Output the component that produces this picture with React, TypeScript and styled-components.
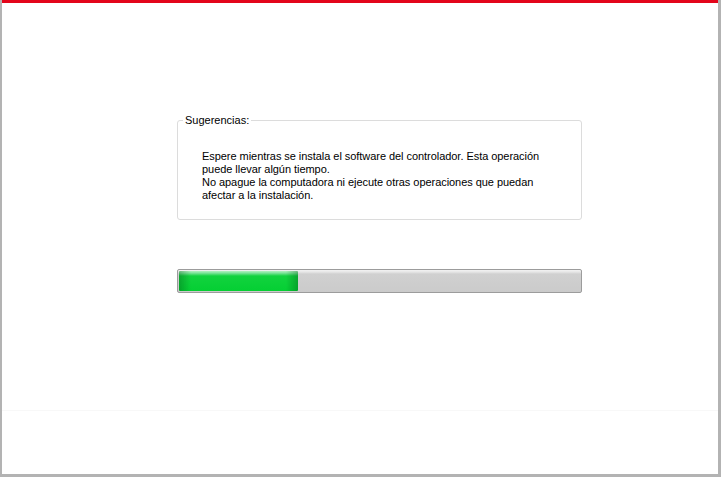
import React from "react";
import styled, { createGlobalStyle } from "styled-components";

const Global = createGlobalStyle`
  html, body { margin: 0; padding: 0; background: #ffffff; }
  body { width: 721px; height: 477px; overflow: hidden; font-family: Tahoma, "Liberation Sans", "DejaVu Sans", sans-serif; }
`;

const Frame = styled.div`
  box-sizing: border-box;
  width: 721px;
  height: 477px;
  border-left: 2px solid #b3b3b3;
  border-right: 3px solid #b3b3b3;
  border-bottom: 3px solid #b3b3b3;
  display: flex;
  flex-direction: column;
  background: #ffffff;
`;

const RedBar = styled.div`
  height: 3px;
  background: #e3051b;
  flex: none;
`;

const Body = styled.div`
  flex: 1;
  display: flex;
  flex-direction: column;
  align-items: flex-start;
  padding: 117px 0 0 175px;
`;

const Group = styled.div`
  position: relative;
  box-sizing: border-box;
  width: 405px;
  height: 100px;
  border: 1px solid #dcdcdc;
  border-radius: 3px;
  padding: 29px 0 0 24px;
`;

const Legend = styled.span`
  position: absolute;
  top: -7px;
  left: 5px;
  padding: 0 2px;
  background: #ffffff;
  font-size: 11px;
  line-height: 13px;
  color: #000000;
`;

const Message = styled.p`
  margin: 0;
  font-size: 11px;
  line-height: 13px;
  letter-spacing: -0.05px;
  color: #000000;
`;

const Track = styled.div`
  margin-top: 49px;
  box-sizing: border-box;
  width: 405px;
  height: 24px;
  border: 1px solid #9c9c9c;
  border-radius: 2px;
  padding: 1px;
  background: linear-gradient(#f2f2f2 0px, #e6e6e6 2px, #d0d0d0 4px, #cbcbcb 100%);
  display: flex;
`;

const Fill = styled.div`
  height: 100%;
  border-radius: 1px;
  background:
    linear-gradient(90deg, rgba(0,80,20,0.35) 0px, rgba(0,0,0,0) 12px, rgba(0,0,0,0) calc(100% - 12px), rgba(0,80,20,0.35) 100%),
    linear-gradient(#b4f0c0 0px, #7de49a 2px, #12d23e 5px, #04cf33 100%);
`;

const Bottom = styled.div`
  height: 63px;
  border-top: 1px solid #f8f8f8;
  flex: none;
`;

export default function App() {
  const progress = 0.297;
  return (
    <>
      <Global />
      <Frame>
        <RedBar />
        <Body>
          <Group>
            <Legend>Sugerencias:</Legend>
            <Message>
              Espere mientras se instala el software del controlador. Esta operación
              <br />
              puede llevar algún tiempo.
              <br />
              No apague la computadora ni ejecute otras operaciones que puedan
              <br />
              afectar a la instalación.
            </Message>
          </Group>
          <Track>
            <Fill style={{ width: `${progress * 100}%` }} />
          </Track>
        </Body>
        <Bottom />
      </Frame>
    </>
  );
}
